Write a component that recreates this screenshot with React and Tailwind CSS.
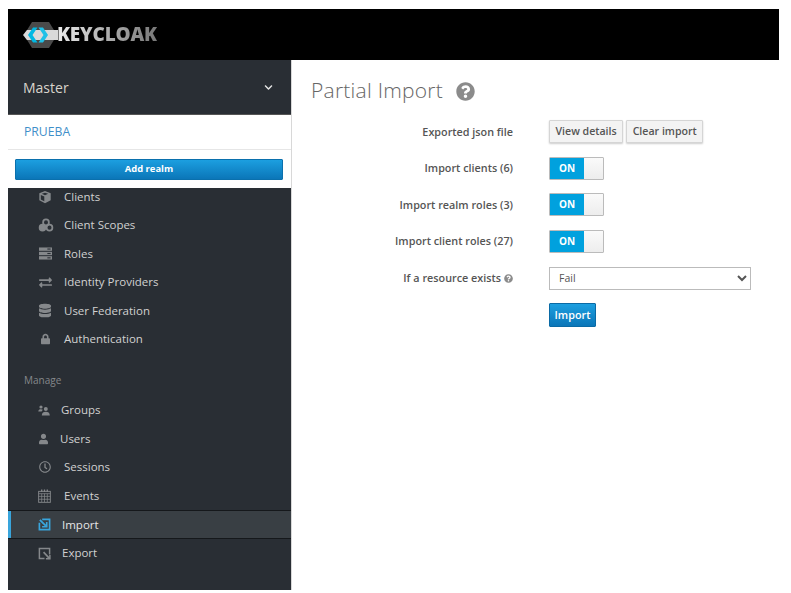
import { FaDatabase, FaExchangeAlt, FaLock, FaQuestionCircle, FaRegClock, FaUser, FaChevronDown } from 'react-icons/fa'

const font = "font-['Open_Sans',sans-serif]"

function CubeIcon({ className }) {
  return (
    <svg viewBox="0 0 16 16" className={className} fill="currentColor">
      <path d="M8 1 L14.5 3.6 V11.8 L8 15 L1.5 11.8 V3.6 Z M8 3 L4.4 4.4 L8 5.9 L11.6 4.4 Z M3.2 5.8 V10.8 L7.2 12.8 V7.4 Z" fillRule="evenodd" />
    </svg>
  )
}

function ScopesIcon({ className }) {
  return (
    <svg viewBox="0 0 18 16" className={className} fill="none" stroke="currentColor" strokeWidth="2">
      <circle cx="9" cy="5" r="3.3" />
      <circle cx="5" cy="11" r="3.3" fill="currentColor" />
      <circle cx="13" cy="11" r="3.3" />
    </svg>
  )
}

function RolesIcon({ className }) {
  return (
    <svg viewBox="0 0 16 14" className={className} fill="currentColor">
      <rect x="1" y="0.5" width="14" height="3.6" />
      <rect x="1" y="5.2" width="14" height="3.6" />
      <rect x="1" y="9.9" width="14" height="3.6" />
      <rect x="10" y="1.6" width="3.5" height="1.2" fill="#292e34" />
      <rect x="10" y="6.4" width="3.5" height="1.2" fill="#292e34" />
      <rect x="10" y="11.1" width="3.5" height="1.2" fill="#292e34" />
    </svg>
  )
}

function GroupsIcon({ className }) {
  return (
    <svg viewBox="0 0 12 11" className={className} fill="currentColor">
      <circle cx="3" cy="2" r="1.6" />
      <path d="M0.3 6.5 C0.3 4.8 1.5 4.2 3 4.2 C3.8 4.2 4.4 4.4 4.8 4.8 L3.6 6.5 Z" />
      <circle cx="7.8" cy="4" r="2" />
      <path d="M3.8 10.6 C3.8 7.8 5.6 6.8 7.8 6.8 C10 6.8 11.8 7.8 11.8 10.6 Z" />
    </svg>
  )
}

function CalendarIcon({ className }) {
  return (
    <svg viewBox="0 0 14 15" className={className} fill="none" stroke="currentColor">
      <rect x="0.7" y="2.5" width="12.6" height="11.8" strokeWidth="1" />
      <path d="M0.7 5 H13.3 M0.7 7.9 H13.3 M0.7 11 H13.3 M4 5 V14 M7 5 V14 M10 5 V14" strokeWidth="0.8" />
      <path d="M4 0.5 V3.2 M7 0.5 V3.2 M10 0.5 V3.2" strokeWidth="1.4" />
    </svg>
  )
}

function ImportIcon({ className }) {
  return (
    <svg viewBox="0 0 14 14" className={className} fill="none" stroke="currentColor">
      <path d="M4.5 1.5 H12.5 V12.5 H1.5 V5" strokeWidth="1.8" />
      <path d="M2 2 L8.5 8.5" strokeWidth="2" />
      <path d="M4.4 9.4 H9.4 V4.4" strokeWidth="1.8" />
    </svg>
  )
}

function ExportIcon({ className }) {
  return (
    <svg viewBox="0 0 14 14" className={className} fill="none" stroke="currentColor">
      <path d="M12.5 8 V1.5 H1.5 V12.5 H7" strokeWidth="1.6" />
      <path d="M6 5.5 L12.5 12.5" strokeWidth="1.8" />
      <path d="M8.5 12.6 H12.8 V8.6" strokeWidth="1.6" />
    </svg>
  )
}

function Logo() {
  return (
    <div className="flex items-center">
      <svg viewBox="0 0 35 26" className="h-[26px] w-[35px] shrink-0">
        <path d="M9 0 H26 L34 13 L26 26 H9 L1 13 Z" fill="#4a4a4a" />
        <path d="M4 8 H35 V18 H4 L0 13 Z" fill="#d9d9d9" />
        <path d="M10 5.5 L5 13 L10 20.5 H14.5 L9.5 13 L14.5 5.5 Z" fill="#00b8e3" />
        <path d="M20 5.5 L25 13 L20 20.5 H15.5 L20.5 13 L15.5 5.5 Z" fill="#1fc0e7" />
      </svg>
      <span className="-ml-[1px] bg-gradient-to-r from-[#ececec] to-[#777] bg-clip-text text-[19px] leading-none font-extrabold tracking-[-0.2px] text-transparent">
        KEYCLOAK
      </span>
    </div>
  )
}

const configureItems = [
  { label: 'Client Scopes', icon: <ScopesIcon className="h-[14px] w-[16px]" /> },
  { label: 'Roles', icon: <RolesIcon className="h-[13px] w-[15px]" /> },
  { label: 'Identity Providers', icon: <FaExchangeAlt className="h-[13px] w-[15px]" /> },
  { label: 'User Federation', icon: <FaDatabase className="ml-[1px] h-[15px] w-[12px]" /> },
  { label: 'Authentication', icon: <FaLock className="ml-[3px] h-[12px] w-[9px]" /> },
]

const manageItems = [
  { label: 'Groups', textLeft: 'w-[23px]', icon: <GroupsIcon className="h-[11px] w-[12px]" /> },
  { label: 'Users', textLeft: 'w-[22px]', icon: <FaUser className="ml-[1px] h-[12px] w-[9px]" /> },
  { label: 'Sessions', textLeft: 'w-[26px]', icon: <FaRegClock className="ml-[1px] h-[12px] w-[12px]" /> },
  { label: 'Events', textLeft: 'w-[26px]', icon: <CalendarIcon className="h-[14px] w-[13px]" /> },
]

function NavRow({ label, icon, textLeft = 'w-[26px]' }) {
  return (
    <div className="flex h-[28.6px] items-center pl-[30px] text-[11.5px] leading-[16px] text-[#d1d1d1]">
      <span className={`flex ${textLeft} shrink-0 items-center text-[#85888b]`}>{icon}</span>
      {label}
    </div>
  )
}

function Toggle() {
  return (
    <div className="flex h-[23px] w-[55px] overflow-hidden rounded-[1px] border border-[#bbb]">
      <span className="flex w-[34px] items-center justify-center bg-[#00a1de] text-[10px] font-bold text-white">ON</span>
      <span className="flex-1 bg-gradient-to-b from-[#fafafa] to-[#ededed]" />
    </div>
  )
}

function FormRow({ label, children }) {
  return (
    <div className="flex h-[36.6px] items-center">
      <div className="flex w-[221px] shrink-0 items-center justify-end gap-[3px] text-[10.8px] font-semibold text-[#555]">{label}</div>
      <div className="ml-[36px] flex-1">{children}</div>
    </div>
  )
}

function GrayButton({ children }) {
  return (
    <button type="button" className="h-[23px] rounded-[1px] border border-[#d5d5d5] bg-[#f3f3f3] px-[5.5px] text-[10.6px] font-semibold text-[#555] shadow-[0_1px_2px_rgba(0,0,0,0.2)]">
      {children}
    </button>
  )
}

export default function App() {
  return (
    <div className={`${font} h-[593px] w-[791px] overflow-hidden bg-white pt-[9px] pr-[12px] pl-[8px]`}>
      <header className="flex h-[51px] items-center bg-black pl-[15px]">
        <Logo />
      </header>

      <div className="flex h-[530px]">
        <aside className="flex w-[284px] shrink-0 flex-col border-r border-[#d8d8d8]">
          <div className="flex h-[55px] shrink-0 items-center justify-between border-b border-[#555] bg-[#292e34] pr-[18px] pl-[15px] text-[14px] text-[#d8d4cc]">
            Master
            <FaChevronDown className="h-[9px] w-[9px] text-[#e4e4e4]" />
          </div>
          <div className="flex h-[35px] shrink-0 items-center border-b border-[#e6e6e6] pl-[16px] text-[12.2px] text-[#3f8fc9]">
            PRUEBA
          </div>
          <div className="h-[38px] shrink-0 pt-[9px] pr-[8px] pl-[7px]">
            <button type="button" className="block h-[21px] w-full rounded-[1px] border border-[#0a70ad] bg-gradient-to-b from-[#1c9fe0] to-[#0b76b8] text-[9.4px] font-bold text-white">
              Add realm
            </button>
          </div>

          <nav className="min-h-0 flex-1 overflow-hidden bg-[#292e34]">
            <div className="-mt-[5.8px]">
              <NavRow label="Clients" icon={<CubeIcon className="h-[14px] w-[14px]" />} />
              {configureItems.map((item) => (
                <NavRow key={item.label} {...item} />
              ))}
              <div className="flex h-[42px] items-center pt-[11px] pl-[16px] text-[10px] text-[#85888b]">Manage</div>
              {manageItems.map((item) => (
                <NavRow key={item.label} {...item} />
              ))}
              <div className="flex h-[28.6px] items-center border-y border-[#15181b] bg-[#393f44] text-[11.5px] text-[#e6e6e6]">
                <span className="h-full w-[3px] bg-[#39a5dc]" />
                <span className="ml-[27px] flex w-[24px] shrink-0 text-[#39a5dc]">
                  <ImportIcon className="h-[13px] w-[13px]" />
                </span>
                Import
              </div>
              <NavRow label="Export" textLeft="w-[24px]" icon={<ExportIcon className="h-[13px] w-[13px]" />} />
            </div>
          </nav>
        </aside>

        <main className="min-w-0 flex-1">
          <h1 className="flex h-[62px] items-center pl-[19px] text-[21px] font-light tracking-[0.25px] text-[#666]">
            Partial Import
            <FaQuestionCircle className="ml-[13px] h-[19px] w-[19px] text-[#8b8b8b]" />
          </h1>
          <div className="-mt-[8.6px]">
            <FormRow label="Exported json file">
              <div className="flex gap-[3px]">
                <GrayButton>View details</GrayButton>
                <GrayButton>Clear import</GrayButton>
              </div>
            </FormRow>
            <FormRow label="Import clients (6)"><Toggle /></FormRow>
            <FormRow label="Import realm roles (3)"><Toggle /></FormRow>
            <FormRow label="Import client roles (27)"><Toggle /></FormRow>
            <FormRow label={<>If a resource exists <FaQuestionCircle className="h-[9px] w-[9px] text-[#8b8b8b]" /></>}>
              <select defaultValue="Fail" className="block h-[23px] w-[202px] border border-[#bbb] bg-white pl-[5px] text-[10.5px] text-[#555]">
                <option>Fail</option>
              </select>
            </FormRow>
            <FormRow label="">
              <button type="button" className="block h-[24px] w-[47px] rounded-[1px] border border-[#0a6aa5] bg-gradient-to-b from-[#1c9fe0] to-[#0b76b8] text-[10.8px] font-semibold text-white">
                Import
              </button>
            </FormRow>
          </div>
        </main>
      </div>
    </div>
  )
}
